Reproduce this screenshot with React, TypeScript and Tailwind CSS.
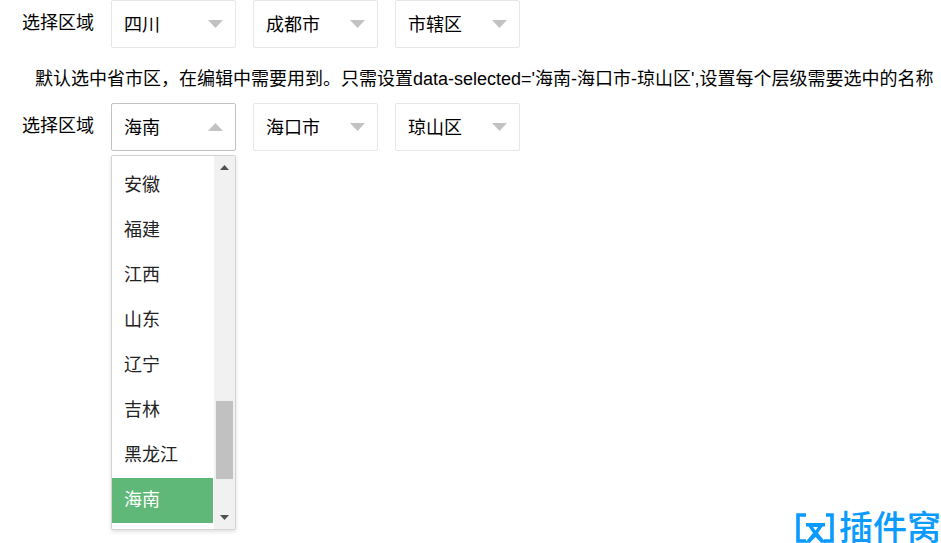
import { useState } from 'react';

const provinces = ['安徽', '福建', '江西', '山东', '辽宁', '吉林', '黑龙江', '海南'];

function Arrow({ up = false }: { up?: boolean }) {
  return (
    <svg
      aria-hidden="true"
      viewBox="0 0 15 8"
      className="pointer-events-none absolute top-5 right-[13px] h-2 w-[15px] fill-[#c2c2c2]"
    >
      <path d={up ? 'M0 8 7.5 0 15 8Z' : 'M0 0H15L7.5 8Z'} />
    </svg>
  );
}

type PickerProps = { id: string; label: string; value: string };

function Picker({ id, label, value }: PickerProps) {
  return (
    <div className="relative w-[125px]">
      <select
        id={id}
        aria-label={label}
        defaultValue={value}
        className="block h-12 w-full appearance-none rounded-xs border border-[#e6e6e6] bg-white px-3 pt-0.5 text-black outline-none"
      >
        <option>{value}</option>
      </select>
      <Arrow />
    </div>
  );
}

function ProvincePicker({ id }: { id: string }) {
  const [open, setOpen] = useState(true);
  const [value, setValue] = useState('海南');

  return (
    <div className="relative w-[125px]">
      <select
        id={id}
        aria-label="省"
        value={value}
        onChange={(e) => setValue(e.target.value)}
        onMouseDown={(e) => {
          e.preventDefault();
          setOpen(!open);
        }}
        className="block h-12 w-full appearance-none rounded-xs border border-[#c2c2c2] bg-white px-3 pt-0.5 text-black outline-none"
      >
        {provinces.map((name) => (
          <option key={name}>{name}</option>
        ))}
      </select>
      <Arrow up={open} />
      {open && (
        <div className="absolute top-full left-0 mt-1 flex w-full rounded-xs border border-[#d2d2d2] bg-white shadow-[0_2px_4px_rgba(0,0,0,0.12)]">
          <ul role="listbox" aria-label="省" className="mr-px flex-1 pt-[7px] pb-1.5">
            {provinces.map((name) => (
              <li
                key={name}
                role="option"
                aria-selected={name === value}
                onClick={() => {
                  setValue(name);
                  setOpen(false);
                }}
                className={
                  name === value
                    ? 'h-[45px] cursor-pointer bg-[#5fb878] px-3 leading-[45px] whitespace-nowrap text-white'
                    : 'h-[45px] cursor-pointer px-3 leading-[45px] whitespace-nowrap text-[#222]'
                }
              >
                {name}
              </li>
            ))}
          </ul>
          <div aria-hidden="true" className="flex w-[21px] flex-col items-center bg-[#f1f1f1] py-[9px]">
            <svg viewBox="0 0 9 5" className="h-[5px] w-[9px] fill-[#505050]">
              <path d="M0 5 4.5 0 9 5Z" />
            </svg>
            <div className="mt-auto mb-9 h-[78px] w-[17px] bg-[#c1c1c1]" />
            <svg viewBox="0 0 9 5" className="h-[5px] w-[9px] fill-[#505050]">
              <path d="M0 0H9L4.5 5Z" />
            </svg>
          </div>
        </div>
      )}
    </div>
  );
}

function Logo() {
  return (
    <div className="absolute right-0 bottom-0 flex items-center gap-[5px] text-[#0a9bff]">
      <svg aria-hidden="true" viewBox="0 0 38 30" className="h-[30px] w-[38px]">
        <path
          d="M10 2H2V28H10M30 2H36V28H28"
          fill="none"
          stroke="currentColor"
          strokeWidth="3.6"
        />
        <path
          d="M10 10H29V13.5H26.5L22 20L30 29.8H25L19.5 24L14 29.8H9L17 20L12.500 13.500H10ZM17 14L19.500 17.500L22 14Z"
          fill="currentColor"
          fillRule="evenodd"
        />
      </svg>
      <span className="text-[34px] leading-[30px] font-medium whitespace-nowrap">插件窝</span>
    </div>
  );
}

export default function App() {
  return (
    <main className="relative min-h-screen bg-white font-['Liberation_Sans','Noto_Sans_CJK_SC',sans-serif] text-[18px] text-black">
      <div className="flex gap-[17px] pl-[22px]">
        <label htmlFor="province-a" className="w-[72px] leading-[46px] whitespace-nowrap">
          选择区域
        </label>
        <Picker id="province-a" label="省" value="四川" />
        <Picker id="city-a" label="市" value="成都市" />
        <Picker id="area-a" label="区" value="市辖区" />
      </div>
      <p className="pt-[17px] pb-2.5 pl-[35px] leading-7">
        默认选中省市区，在编辑中需要用到。只需设置data-selected='海南-海口市-琼山区',设置每个层级需要选中的名称
      </p>
      <div className="flex gap-[17px] pl-[22px]">
        <label htmlFor="province-b" className="w-[72px] leading-[46px] whitespace-nowrap">
          选择区域
        </label>
        <ProvincePicker id="province-b" />
        <Picker id="city-b" label="市" value="海口市" />
        <Picker id="area-b" label="区" value="琼山区" />
      </div>
      <Logo />
    </main>
  );
}
